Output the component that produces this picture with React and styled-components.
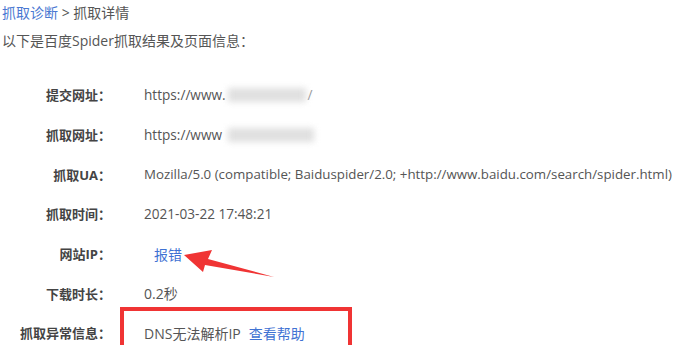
import React from 'react';
import styled, { createGlobalStyle } from 'styled-components';

const GlobalStyle = createGlobalStyle`
  html, body {
    margin: 0;
    padding: 0;
    background: #ffffff;
  }
  body {
    font-family: "Open Sans", "Noto Sans CJK SC", sans-serif;
    font-size: 14px;
    color: #555;
  }
`;

const Page = styled.div`
  position: relative;
  width: 680px;
  height: 345px;
  overflow: hidden;
  padding: 3px 0 0 2px;
  box-sizing: border-box;
`;

const Crumbs = styled.div`
  height: 20px;
  line-height: 20px;
  color: #555;
  a {
    color: #4a78d2;
    text-decoration: none;
  }
`;

const Intro = styled.div`
  margin-top: 8px;
  height: 20px;
  line-height: 20px;
  color: #555;
`;

const Table = styled.div`
  margin-top: 24px;
  display: grid;
  grid-template-columns: 109px 1fr;
  grid-auto-rows: 39.7px;
  column-gap: 33px;
`;

const Label = styled.div`
  display: flex;
  align-items: center;
  justify-content: flex-end;
  font-size: 13px;
  font-weight: bold;
  color: #444;
  white-space: nowrap;
`;

const Value = styled.div`
  position: relative;
  display: flex;
  align-items: center;
  white-space: nowrap;
  color: #555;
  font-size: ${p => p.$size || 14}px;
  padding-left: ${p => p.$indent || 0}px;
`;

const Link = styled.span`
  color: #3f72d3;
  margin-left: ${p => p.$gap || 0}px;
`;

const Blur = styled.span`
  display: inline-block;
  width: ${p => p.$w}px;
  height: 14px;
  margin-left: ${p => p.$ml || 0}px;
  background: #d8d8d8;
  filter: blur(3px);
  opacity: 0.8;
`;

const Slash = styled.span`
  color: #999;
  margin-left: 2px;
`;

const RedBox = styled.div`
  position: absolute;
  left: -24px;
  top: -6px;
  width: 224px;
  height: 60px;
  border: 4px solid #f03434;
`;

const Arrow = styled.svg`
  position: absolute;
  left: 0;
  top: 0;
  pointer-events: none;
`;

export default function App() {
  return (
    <>
      <GlobalStyle />
      <Page>
        <Crumbs>
          <a href="#">抓取诊断</a> &gt; 抓取详情
        </Crumbs>
        <Intro>以下是百度Spider抓取结果及页面信息：</Intro>
        <Table>
          <Label>提交网址：</Label>
          <Value $size={13.6}>
            https://www.<Blur $w={78} $ml={2} /><Slash>/</Slash>
          </Value>
          <Label>抓取网址：</Label>
          <Value $size={13.6}>
            https://www<Blur $w={86} $ml={6} />
          </Value>
          <Label>抓取UA：</Label>
          <Value $size={13.3}>Mozilla/5.0 (compatible; Baiduspider/2.0; +http://www.baidu.com/search/spider.html)</Value>
          <Label>抓取时间：</Label>
          <Value $size={13.6}>2021-03-22 17:48:21</Value>
          <Label>网站IP：</Label>
          <Value $indent={10}><Link>报错</Link></Value>
          <Label>下载时长：</Label>
          <Value>0.2秒</Value>
          <Label>抓取异常信息：</Label>
          <Value>
            DNS无法解析IP<Link $gap={8}>查看帮助</Link>
            <RedBox />
          </Value>
        </Table>
        <Arrow width="680" height="345" viewBox="0 0 680 345">
          <polygon
            points="184,255 212,250 208,259 274,277 205,265 203,272"
            fill="#f03434"
          />
        </Arrow>
      </Page>
    </>
  );
}
